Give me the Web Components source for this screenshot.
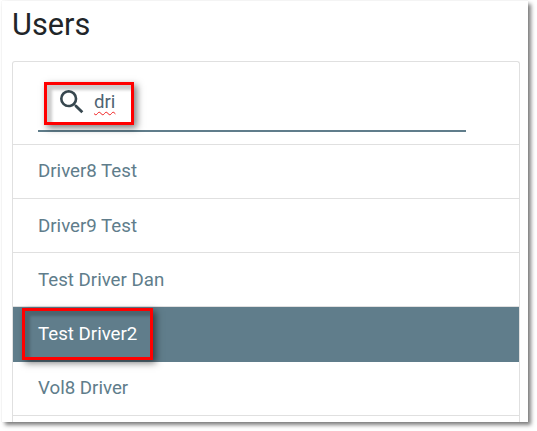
<!DOCTYPE html>
<html>
<head>
<meta charset="utf-8">
<title>Users</title>
<style>
  html, body { margin: 0; padding: 0; background: #fff; height: 431px; overflow: hidden; }
  body { font-family: Roboto, "Liberation Sans", sans-serif; }
</style>
</head>
<body>
<screen-shot>
  <users-panel>
    <search-box value="dri"></search-box>
    <user-row>Driver8 Test</user-row>
    <user-row shift>Driver9 Test</user-row>
    <user-row shift>Test Driver Dan</user-row>
    <user-row shift selected>Test Driver2</user-row>
    <user-row>Vol8 Driver</user-row>
    <call-out slot="notes" style="left:32px;top:81px;width:90px;height:43px"></call-out>
    <call-out slot="notes" style="left:10px;top:307px;width:131px;height:52px"></call-out>
  </users-panel>
</screen-shot>

<script>
class ScreenShot extends HTMLElement {
  constructor() {
    super();
    this.attachShadow({ mode: "open" }).innerHTML = `
      <style>
        :host {
          display: block;
          box-sizing: border-box;
          width: 526px;
          height: 421px;
          margin: 1px 0 0 2px;
          padding: 0 8px 0 10px;
          background: #fff;
          box-shadow: 3px 3px 4px rgba(0, 0, 0, 0.5), 0 0 1px rgba(0, 0, 0, 0.12);
        }
        .clip { height: 100%; overflow: hidden; }
      </style>
      <div class="clip"><slot></slot></div>
    `;
  }
}

class UsersPanel extends HTMLElement {
  constructor() {
    super();
    this.attachShadow({ mode: "open" }).innerHTML = `
      <style>
        :host { display: block; position: relative; }
        h1 {
          margin: 0;
          height: 60px;
          padding-top: 7px;
          box-sizing: border-box;
          font: 400 30.7px/34px Roboto, sans-serif;
          color: #212529;
        }
        .card {
          border: 1px solid #e0e0e0;
          border-bottom: 0;
          border-radius: 3px 3px 0 0;
          height: 370px;
        }
      </style>
      <h1>Users</h1>
      <div class="card"><slot></slot></div>
      <slot name="notes"></slot>
    `;
  }
}

class SearchBox extends HTMLElement {
  constructor() {
    super();
    const value = this.getAttribute("value") || "";
    this.attachShadow({ mode: "open" }).innerHTML = `
      <style>
        :host {
          display: block;
          box-sizing: border-box;
          height: 83px;
          padding: 0 53px 0 25px;
          border-bottom: 1px solid #e0e0e0;
        }
        .field {
          display: flex;
          align-items: center;
          gap: 6px;
          box-sizing: border-box;
          height: 70px;
          padding: 12px 0 0 18px;
          border-bottom: 2px solid #607d8b;
        }
        svg { flex: none; display: block; }
        .text {
          font: 400 18.7px/24px Roboto, sans-serif;
          color: #4f6472;
          text-decoration: underline wavy #f02020 1.2px;
          text-underline-offset: 3px;
        }
      </style>
      <div class="field">
        <svg width="32" height="32" viewBox="0 0 24 24" fill="#37474f"><path d="M15.5 14h-.79l-.28-.27A6.47 6.47 0 0 0 16 9.5 6.5 6.5 0 1 0 9.5 16c1.61 0 3.09-.59 4.23-1.57l.27.28v.79l5 4.99L20.49 19l-4.99-5zm-6 0C7.01 14 5 11.99 5 9.5S7.01 5 9.5 5 14 7.01 14 9.5 11.99 14 9.5 14z"/></svg>
        <span class="text">${value}</span>
      </div>
    `;
  }
}

class UserRow extends HTMLElement {
  constructor() {
    super();
    this.attachShadow({ mode: "open" }).innerHTML = `
      <style>
        :host {
          display: flex;
          align-items: center;
          box-sizing: border-box;
          height: 54px;
          padding: 0 25px 2px 25px;
          border-bottom: 1px solid #e0e0e0;
          font: 400 18.7px/24px Roboto, sans-serif;
          color: #607d8b;
        }
        :host([shift]) { padding-bottom: 0; }
        :host([selected]) {
          height: 55px;
          background: #607d8b;
          color: #fff;
          border-bottom-color: #607d8b;
        }
      </style>
      <slot></slot>
    `;
  }
}

// red annotation rectangle drawn over the screenshot, with its drop shadow
class CallOut extends HTMLElement {
  constructor() {
    super();
    this.attachShadow({ mode: "open" }).innerHTML = `
      <style>
        :host {
          display: block;
          position: absolute;
          box-sizing: border-box;
          border: 3px solid #f00;
          box-shadow: 3px 3px 7px rgba(0, 0, 0, 0.5), inset 6px 6px 3px -1px rgba(0, 0, 0, 0.2);
          pointer-events: none;
        }
      </style>
    `;
  }
}

customElements.define("screen-shot", ScreenShot);
customElements.define("users-panel", UsersPanel);
customElements.define("search-box", SearchBox);
customElements.define("user-row", UserRow);
customElements.define("call-out", CallOut);
</script>
</body>
</html>
